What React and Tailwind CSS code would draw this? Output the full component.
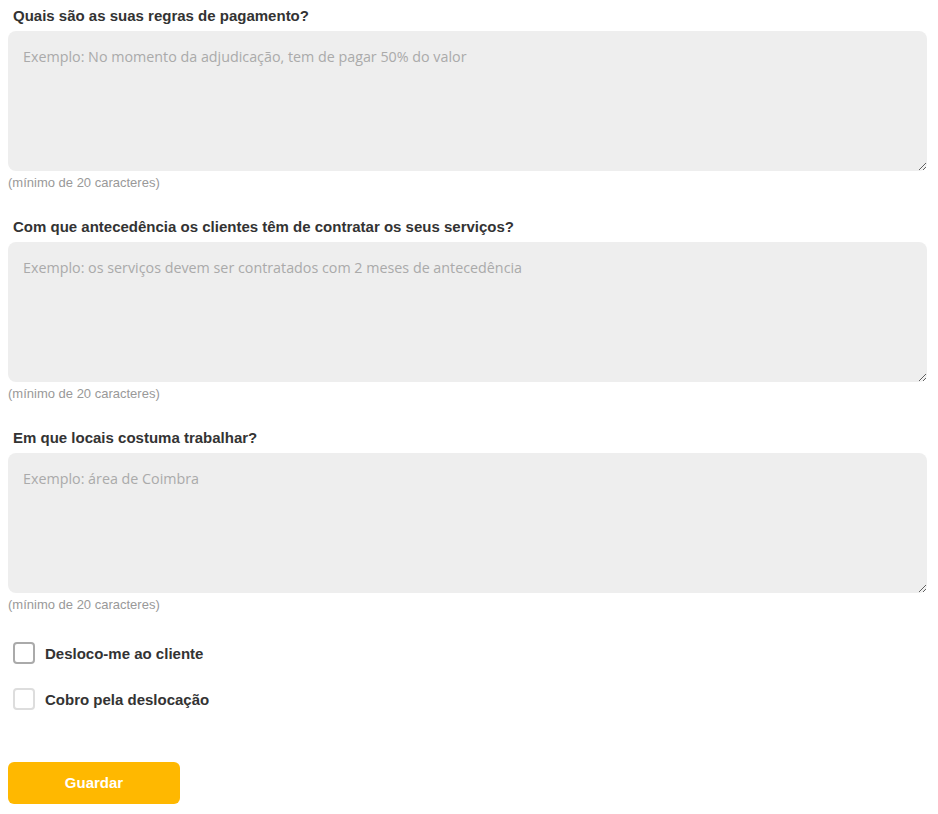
import React from "react";

const sections = [
  { label: "Quais são as suas regras de pagamento?", ph: "Exemplo: No momento da adjudicação, tem de pagar 50% do valor" },
  { label: "Com que antecedência os clientes têm de contratar os seus serviços?", ph: "Exemplo: os serviços devem ser contratados com 2 meses de antecedência" },
  { label: "Em que locais costuma trabalhar?", ph: "Exemplo: área de Coimbra" },
];

export default function App() {
  return (
    <div className="w-[938px] h-[814px] bg-white px-2 font-['Liberation_Sans',Arial,sans-serif] text-[#333]">
      {sections.map((s, i) => (
        <div key={i} className={i === 0 ? "" : "mt-[21px]"}>
          <div className="pl-[5px] pt-[7px] pb-[7px] text-[15px] leading-[17px] font-bold text-[#333]">{s.label}</div>
          <textarea
            placeholder={s.ph}
            className="block w-[919px] h-[140px] rounded-[8px] bg-[#eeeeee] px-[15px] py-[16px] text-[14.3px] leading-[20px] font-['Open_Sans',sans-serif] placeholder:text-[#aaaaaa] outline-none"
          />
          <div className="mt-[4px] text-[13px] leading-[15px] text-[#999]">(mínimo de 20 caracteres)</div>
        </div>
      ))}
      <div className="mt-[30px] pl-[5px] flex flex-col gap-[24px]">
        <label className="flex items-center gap-[10px] h-[22px]">
          <span className="w-[22px] h-[22px] rounded-[4px] border-2 border-[#aaaaaa] bg-white" />
          <span className="text-[15px] leading-[17px] font-bold text-[#333]">Desloco-me ao cliente</span>
        </label>
        <label className="flex items-center gap-[10px] h-[22px]">
          <span className="w-[22px] h-[22px] rounded-[4px] border-2 border-[#dddddd] bg-white" />
          <span className="text-[15px] leading-[17px] font-bold text-[#333]">Cobro pela deslocação</span>
        </label>
      </div>
      <button className="block mt-[52px] w-[172px] h-[42px] rounded-[6px] bg-[#ffb800] text-white text-[15px] font-bold">
        Guardar
      </button>
    </div>
  );
}
